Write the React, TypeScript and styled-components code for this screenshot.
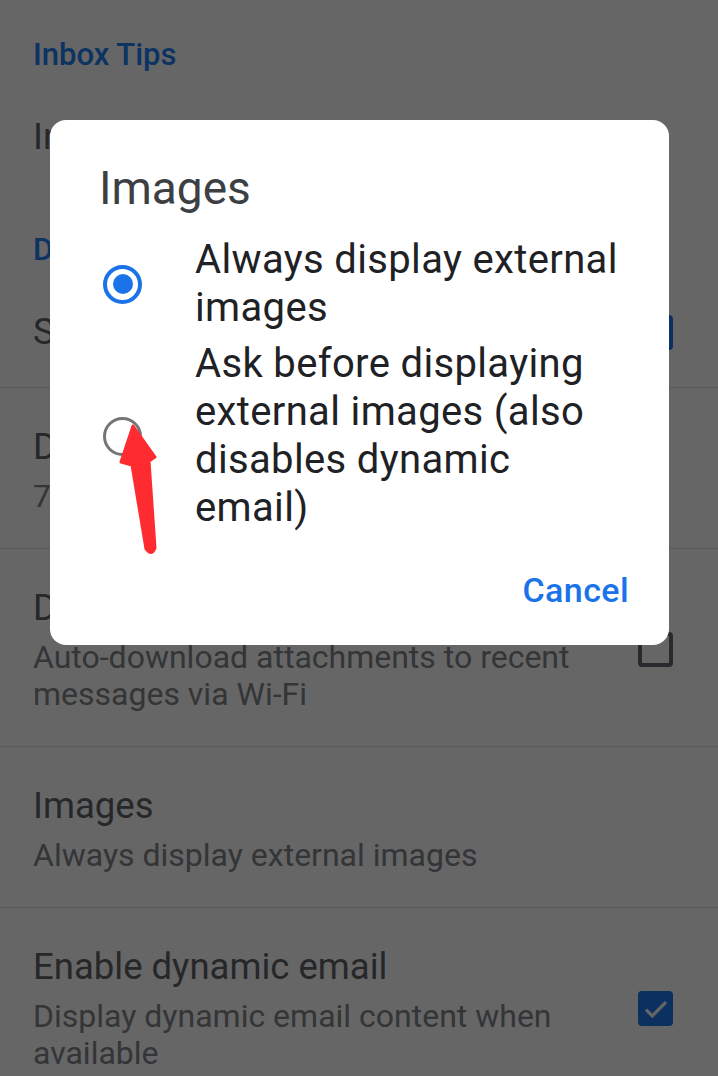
import React from "react";
import styled, { createGlobalStyle } from "styled-components";

const Global = createGlobalStyle`
  html, body { margin: 0; padding: 0; background: #ffffff; }
  body { width: 718px; height: 1076px; overflow: hidden; font-family: Roboto, "Noto Sans", Arial, sans-serif; }
`;

const Page = styled.div`
  width: 718px;
  height: 1076px;
  overflow: hidden;
  background: #ffffff;
  padding-top: 0;
  margin-top: -2px;
`;

const SectionHeader = styled.div`
  padding: 37px 33px 3px;
  font-size: 31px;
  line-height: 40px;
  font-weight: 500;
  color: #1f80f6;
`;

const Row = styled.div<{ $divider?: boolean }>`
  display: flex;
  align-items: center;
  padding: 37px 45px 33px 33px;
  border-bottom: ${(p) => (p.$divider ? "1px solid #e0e0e0" : "1px solid transparent")};
`;

const RowText = styled.div`
  flex: 1;
  display: flex;
  flex-direction: column;
  gap: 9px;
  min-width: 0;
`;

const Title = styled.div`
  font-size: 36.5px;
  line-height: 44px;
  color: #5f6368;
`;

const Subtitle = styled.div`
  font-size: 32px;
  line-height: 37px;
  color: #80868b;
  max-width: 570px;
`;

const Checkbox = styled.div<{ $checked?: boolean }>`
  width: 35px;
  height: 35px;
  box-sizing: border-box;
  flex-shrink: 0;
  margin-left: 30px;
  border-radius: 4px;
  border: ${(p) => (p.$checked ? "none" : "4px solid #666a70")};
  background: ${(p) => (p.$checked ? "#1f78ee" : "transparent")};
  display: flex;
  align-items: center;
  justify-content: center;
`;

const Scrim = styled.div`
  position: fixed;
  inset: 0;
  background: rgba(0, 0, 0, 0.6);
  padding: 120px 0 0 50px;
`;

const Dialog = styled.div`
  width: 619px;
  height: 525px;
  box-sizing: border-box;
  background: #ffffff;
  border-radius: 16px;
  padding: 40px 0 0 49px;
  display: flex;
  flex-direction: column;
`;

const DialogTitle = styled.div`
  font-size: 46px;
  line-height: 56px;
  color: #3c4043;
  margin-bottom: 20px;
`;

const Options = styled.div`
  display: flex;
  flex-direction: column;
  gap: 8px;
  padding-right: 45px;
`;

const Option = styled.div`
  display: flex;
  align-items: center;
`;

const RadioCell = styled.div`
  width: 96px;
  flex-shrink: 0;
  padding-left: 4px;
  box-sizing: border-box;
`;

const Radio = styled.div<{ $checked?: boolean }>`
  width: 39px;
  height: 39px;
  box-sizing: border-box;
  border-radius: 50%;
  border: ${(p) => (p.$checked ? "4px solid #1a73e8" : "3.5px solid #757575")};
  display: flex;
  align-items: center;
  justify-content: center;
  &::after {
    content: "";
    display: ${(p) => (p.$checked ? "block" : "none")};
    width: 20px;
    height: 20px;
    border-radius: 50%;
    background: #1a73e8;
  }
`;

const OptionLabel = styled.div`
  flex: 1;
  font-size: 40px;
  line-height: 48px;
  letter-spacing: 0.35px;
  color: #202124;
`;

const Actions = styled.div`
  display: flex;
  justify-content: flex-end;
  padding: 30px 40px 0 0;
`;

const TextButton = styled.button`
  border: none;
  background: transparent;
  padding: 0;
  height: 56px;
  font-family: Roboto, "Noto Sans", Arial, sans-serif;
  font-size: 34px;
  font-weight: 500;
  letter-spacing: 0.4px;
  color: #1a73e8;
  cursor: pointer;
`;

const Annotation = styled.svg`
  position: fixed;
  inset: 0;
  pointer-events: none;
`;

const Check = () => (
  <svg width="30" height="30" viewBox="0 0 24 24">
    <path d="M4 12.5l5 5L20 6.5" fill="none" stroke="#ffffff" strokeWidth="2.6" />
  </svg>
);

export default function App() {
  return (
    <>
      <Global />
      <Page>
        <SectionHeader>Inbox Tips</SectionHeader>
        <Row>
          <RowText>
            <Title>Inbox tips</Title>
          </RowText>
        </Row>
        <SectionHeader>Data usage</SectionHeader>
        <Row $divider>
          <RowText>
            <Title>Sync Gmail</Title>
          </RowText>
          <Checkbox $checked>
            <Check />
          </Checkbox>
        </Row>
        <Row $divider>
          <RowText>
            <Title>Days of mail to sync</Title>
            <Subtitle>7 days</Subtitle>
          </RowText>
        </Row>
        <Row $divider>
          <RowText>
            <Title>Download attachments</Title>
            <Subtitle>Auto-download attachments to recent messages via Wi-Fi</Subtitle>
          </RowText>
          <Checkbox />
        </Row>
        <Row $divider>
          <RowText>
            <Title>Images</Title>
            <Subtitle>Always display external images</Subtitle>
          </RowText>
        </Row>
        <Row>
          <RowText>
            <Title>Enable dynamic email</Title>
            <Subtitle>Display dynamic email content when available</Subtitle>
          </RowText>
          <Checkbox $checked>
            <Check />
          </Checkbox>
        </Row>
      </Page>
      <Scrim>
        <Dialog>
          <DialogTitle>Images</DialogTitle>
          <Options>
            <Option>
              <RadioCell>
                <Radio $checked />
              </RadioCell>
              <OptionLabel>Always display external images</OptionLabel>
            </Option>
            <Option>
              <RadioCell>
                <Radio />
              </RadioCell>
              <OptionLabel>Ask before displaying external images (also disables dynamic email)</OptionLabel>
            </Option>
          </Options>
          <Actions>
            <TextButton>Cancel</TextButton>
          </Actions>
        </Dialog>
      </Scrim>
      <Annotation width="718" height="1076" viewBox="0 0 718 1076">
        <path
          d="M133 426 L155 457 L149 461 L155 548 Q153 554 149 552 L146 549 L132 465 L121 462 Z"
          fill="#fe2b30"
          stroke="#fe2b30"
          strokeWidth="3"
          strokeLinejoin="round"
        />
      </Annotation>
    </>
  );
}
